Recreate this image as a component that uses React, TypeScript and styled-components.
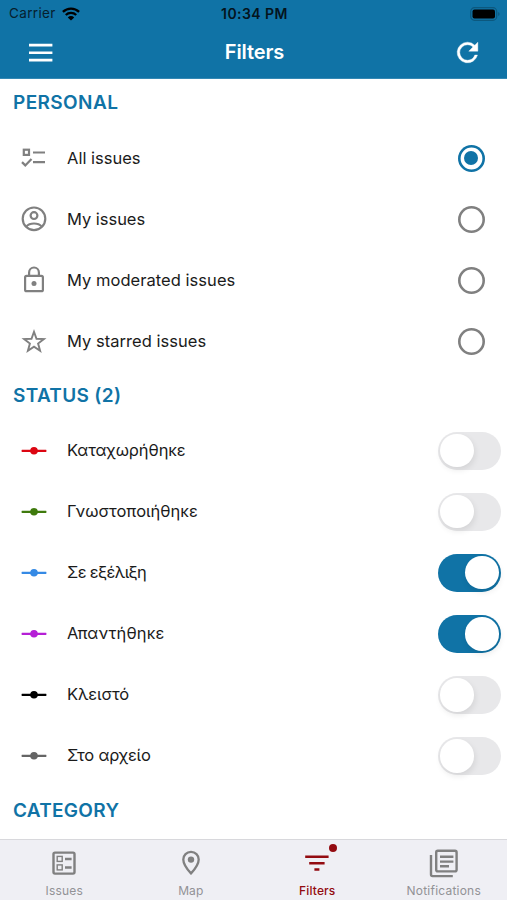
import React, { useState } from "react";
import styled, { createGlobalStyle } from "styled-components";

const BLUE = "#1073a6";
const GREY = "#808080";
const RED = "#930b10";

const GlobalStyle = createGlobalStyle`
  *, *::before, *::after { box-sizing: border-box; }
  body {
    margin: 0;
    background: #fff;
    font-family: Inter, "Liberation Sans", sans-serif;
    font-kerning: normal;
  }
  button { font: inherit; border: 0; padding: 0; background: none; cursor: pointer; }
  svg { display: block; flex: none; }
`;

const Screen = styled.div`
  height: 900px;
  width: 100%;
  display: flex;
  flex-direction: column;
  overflow: hidden;
  background: #fff;
`;

const Header = styled.header`
  flex: none;
  height: 79px;
  background: ${BLUE};
  border-bottom: 1px solid #3488b4;
`;

const StatusBar = styled.div`
  height: 27px;
  display: grid;
  grid-template-columns: 1fr auto 1fr;
  align-items: center;
  padding: 0 7px 0 9px;
  color: #06202d;
  font-size: 13.5px;
  line-height: 27px;
`;

const Carrier = styled.div`
  display: flex;
  align-items: center;
  gap: 6px;
  letter-spacing: 0.36px;
`;

const Clock = styled.div`
  color: #04141d;
  font-weight: 600;
  font-size: 14px;
  letter-spacing: 0.45px;
`;

const BatterySlot = styled.div`
  display: flex;
  justify-content: flex-end;
`;

const Toolbar = styled.div`
  height: 51px;
  display: grid;
  grid-template-columns: 1fr auto 1fr;
  align-items: center;
  padding: 0 24px 0 26px;
  color: #fff;
`;

const ToolButton = styled.button<{ $end?: boolean }>`
  display: flex;
  justify-self: ${(p) => (p.$end ? "end" : "start")};
  color: #fff;
`;

const Title = styled.h1`
  margin: 0;
  font-size: 20px;
  line-height: 24px;
  padding-bottom: 1px;
  font-weight: 600;
  letter-spacing: -0.1px;
`;

const Content = styled.main`
  flex: 1;
  min-height: 0;
  overflow: hidden;
  padding-top: 0.4px;
`;

const SectionTitle = styled.h2<{ $spacing: number }>`
  margin: 0;
  height: 48.1px;
  padding: 0 13px;
  line-height: 48px;
  font-size: 19px;
  font-weight: 600;
  color: ${BLUE};
  letter-spacing: ${(p) => p.$spacing}px;
`;

const Row = styled.label`
  height: 61.1px;
  display: grid;
  grid-template-columns: 30px 1fr auto;
  column-gap: 18px;
  align-items: center;
  padding: 0 6.5px 0 19px;
  cursor: pointer;
`;

const Label = styled.span<{ $spacing: number }>`
  font-size: 16.5px;
  line-height: 21px;
  color: #1b1b1b;
  white-space: nowrap;
  letter-spacing: ${(p) => p.$spacing}px;
`;

const Radio = styled.button<{ $on: boolean }>`
  width: 27px;
  height: 27px;
  margin-right: 16px;
  display: grid;
  place-items: center;
  box-shadow: inset 0 0 0 2.6px ${(p) => (p.$on ? BLUE : GREY)};
  border-radius: 50%;
  &::after {
    content: "";
    width: 14px;
    height: 14px;
    border-radius: 50%;
    background: ${(p) => (p.$on ? BLUE : "transparent")};
  }
`;

const Toggle = styled.button<{ $on: boolean }>`
  width: 62.5px;
  height: 38px;
  padding: 0 2px;
  display: flex;
  align-items: center;
  justify-content: ${(p) => (p.$on ? "flex-end" : "flex-start")};
  border-radius: 19px;
  background: ${(p) => (p.$on ? BLUE : "#e8e8ea")};
  &::after {
    content: "";
    width: 33.5px;
    height: 33.5px;
    border-radius: 50%;
    background: #fff;
    box-shadow: 1px 3px 6px rgba(0, 0, 0, 0.09);
  }
`;

const TabBar = styled.nav`
  flex: none;
  height: 61px;
  display: grid;
  grid-template-columns: repeat(4, 126.5px);
  border-top: 1px solid #d8d8dc;
  background: #efeff4;
`;

const Tab = styled.button<{ $active: boolean }>`
  position: relative;
  display: flex;
  flex-direction: column;
  align-items: center;
  padding-top: 7px;
  padding-left: 2px;
  color: ${(p) => (p.$active ? RED : GREY)};
`;

const TabLabel = styled.span<{ $active: boolean; $spacing: number }>`
  margin-top: 3px;
  font-size: 12px;
  line-height: 18px;
  font-weight: ${(p) => (p.$active ? 500 : 400)};
  color: ${(p) => (p.$active ? RED : "#929296")};
  letter-spacing: ${(p) => p.$spacing}px;
`;

const Badge = styled.i`
  position: absolute;
  top: 4px;
  left: 75.5px;
  width: 8px;
  height: 8px;
  border-radius: 50%;
  background: ${RED};
`;

const WifiIcon = () => (
  <svg width="18" height="14" viewBox="0 0 18 14" fill="none" stroke="#000" strokeWidth="2.3">
    <path d="M.9 4.9a11.6 11.6 0 0 1 16.2 0" />
    <path d="M3.8 8a7.4 7.4 0 0 1 10.4 0" />
    <path d="M9 13.6 5.8 10.4a4.6 4.6 0 0 1 6.4 0z" fill="#000" stroke="none" />
  </svg>
);

const BatteryIcon = () => (
  <svg width="30" height="14" viewBox="0 0 30 14">
    <rect x=".7" y=".7" width="26" height="12.6" rx="3.8" fill="none" stroke="#0c587e" strokeWidth="1.2" />
    <rect x="2.5" y="2.6" width="22.5" height="8.8" rx="2" fill="#000" />
    <path d="M28.2 5v4q1.4-.6 1.4-2T28.2 5z" fill="#0c587e" />
  </svg>
);

const MenuIcon = () => (
  <svg width="30" height="30" viewBox="0 0 30 30" stroke="#fff" strokeWidth="2.6">
    <path d="M3 7.1h23.4M3 14.7h23.4M3 22.1h23.4" />
  </svg>
);

const RefreshIcon = () => (
  <svg width="31" height="31" viewBox="0 0 24 24" fill="currentColor">
    <path d="M17.65 6.35A7.96 7.96 0 0 0 12 4a8 8 0 1 0 7.73 10h-2.08A5.99 5.99 0 0 1 12 18a6 6 0 1 1 0-12c1.66 0 3.14.69 4.22 1.78L13 11h7V4l-2.35 2.35z" stroke="currentColor" strokeWidth=".3" />
  </svg>
);

const ListIcon = () => (
  <svg width="30" height="30" viewBox="0 0 30 30" fill="none" stroke={GREY} strokeWidth="2.2">
    <rect x="4.8" y="6.7" width="5.2" height="5.2" />
    <path d="M14 9.5h12M14 19.2h12M3 19.1l3.3 3.3 6.2-6.4" />
  </svg>
);

const AccountIcon = () => (
  <svg width="30" height="30" viewBox="0 0 30 30" fill="none" stroke={GREY} strokeWidth="2.2">
    <circle cx="15" cy="14.8" r="11.3" />
    <circle cx="15" cy="11.6" r="3.4" />
    <path d="M7.2 22.6C9 20.5 12 19.5 15 19.5s6 1 7.8 3.1" />
  </svg>
);

const LockIcon = () => (
  <svg width="30" height="30" viewBox="0 0 30 30" fill="none" stroke={GREY} strokeWidth="2.2">
    <rect x="6.1" y="10.9" width="17.8" height="15.3" rx="1.5" />
    <path d="M10.1 10.8V7.4a4.9 4.9 0 0 1 9.8 0v3.4" />
    <circle cx="15" cy="18.5" r="2.5" fill={GREY} stroke="none" />
  </svg>
);

const StarIcon = () => (
  <svg width="30" height="30" viewBox="0 0 30 30" fill="none" stroke={GREY} strokeWidth="1.9">
    <path d="m15 5.8 2.5 7 7.4.3-5.8 4.5 2 7.1-6.1-4.1-6.1 4.1 2-7.1-5.8-4.5 7.4-.3z" />
  </svg>
);

const StatusMark = ({ color }: { color: string }) => (
  <svg width="30" height="30" viewBox="0 0 30 30" fill={color}>
    <rect x="2.6" y="13.7" width="24.8" height="2.2" rx=".4" />
    <circle cx="15" cy="14.8" r="3.8" />
  </svg>
);

const BallotIcon = () => (
  <svg width="32" height="32" viewBox="0 0 32 32" fill="none" stroke="currentColor">
    <rect x="5.5" y="5.6" width="21" height="21" rx="1.5" strokeWidth="2.4" />
    <rect x="9.2" y="9.4" width="5" height="5" strokeWidth="1.4" />
    <rect x="9.2" y="17.9" width="5" height="5" strokeWidth="1.4" />
    <path d="M17 12h6.6M17 20.5h6.6" strokeWidth="2.3" />
  </svg>
);

const PinIcon = () => (
  <svg width="32" height="32" viewBox="0 0 32 32" fill="none" stroke="currentColor" strokeWidth="2.3">
    <path d="M16 4.9c-4.4 0-7.7 3.3-7.7 7.6C8.3 18.2 16 26.4 16 26.4s7.7-8.2 7.7-13.9c0-4.3-3.3-7.6-7.7-7.6z" />
    <circle cx="16" cy="12.6" r="3.2" fill="currentColor" stroke="none" />
  </svg>
);

const FilterIcon = () => (
  <svg width="32" height="32" viewBox="0 0 32 32" stroke="currentColor" strokeWidth="2.5">
    <path d="M4.2 9.8h23.4M8.2 16.2h15.4M13.4 22.6h5" />
  </svg>
);

const NewsIcon = () => (
  <svg width="32" height="32" viewBox="0 0 32 32" fill="none" stroke="currentColor" strokeWidth="2.4">
    <rect x="8.2" y="3.8" width="20.4" height="20.6" rx="1.6" />
    <path d="M3 8v19.5q0 1.6 1.6 1.6h20.2M12 9.7h13.4M12 14.6h13.4M12 19.2h9" />
  </svg>
);

const personal = [
  { label: "All issues", spacing: 0, Icon: ListIcon },
  { label: "My issues", spacing: -0.03, Icon: AccountIcon },
  { label: "My moderated issues", spacing: 0.04, Icon: LockIcon },
  { label: "My starred issues", spacing: 0.03, Icon: StarIcon },
];

const statuses = [
  { label: "Καταχωρήθηκε", spacing: -0.1, color: "#dc0612" },
  { label: "Γνωστοποιήθηκε", spacing: 0, color: "#3f7a0d" },
  { label: "Σε εξέλιξη", spacing: -0.68, color: "#358ae5" },
  { label: "Απαντήθηκε", spacing: 0.12, color: "#b51fd6" },
  { label: "Κλειστό", spacing: -0.15, color: "#000000" },
  { label: "Στο αρχείο", spacing: -0.2, color: "#656565" },
];

const tabs = [
  { label: "Issues", spacing: 0.2, Icon: BallotIcon },
  { label: "Map", spacing: 0.1, Icon: PinIcon },
  { label: "Filters", spacing: 0.15, Icon: FilterIcon },
  { label: "Notifications", spacing: 0.22, Icon: NewsIcon },
];

export default function App() {
  const [scope, setScope] = useState(0);
  const [enabled, setEnabled] = useState([false, false, true, true, false, false]);
  const [tab, setTab] = useState(2);
  const count = enabled.filter(Boolean).length;

  return (
    <>
      <GlobalStyle />
      <Screen>
        <Header>
          <StatusBar>
            <Carrier>Carrier<WifiIcon /></Carrier>
            <Clock>10:34 PM</Clock>
            <BatterySlot><BatteryIcon /></BatterySlot>
          </StatusBar>
          <Toolbar>
            <ToolButton aria-label="Menu"><MenuIcon /></ToolButton>
            <Title>Filters</Title>
            <ToolButton $end aria-label="Refresh"><RefreshIcon /></ToolButton>
          </Toolbar>
        </Header>
        <Content>
          <SectionTitle $spacing={0.4}>PERSONAL</SectionTitle>
          {personal.map(({ label, spacing, Icon }, i) => (
            <Row key={label}>
              <Icon />
              <Label $spacing={spacing}>{label}</Label>
              <Radio $on={scope === i} role="radio" aria-checked={scope === i} onClick={() => setScope(i)} />
            </Row>
          ))}
          <SectionTitle $spacing={0.32}>STATUS ({count})</SectionTitle>
          {statuses.map(({ label, spacing, color }, i) => (
            <Row key={label}>
              <StatusMark color={color} />
              <Label $spacing={spacing}>{label}</Label>
              <Toggle
                $on={enabled[i]}
                role="switch"
                aria-checked={enabled[i]}
                onClick={() => setEnabled(enabled.map((v, n) => (n === i ? !v : v)))}
              />
            </Row>
          ))}
          <SectionTitle $spacing={0.28}>CATEGORY</SectionTitle>
        </Content>
        <TabBar>
          {tabs.map(({ label, spacing, Icon }, i) => (
            <Tab key={label} $active={tab === i} onClick={() => setTab(i)}>
              <Icon />
              {i === 2 && <Badge />}
              <TabLabel $active={tab === i} $spacing={spacing}>{label}</TabLabel>
            </Tab>
          ))}
        </TabBar>
      </Screen>
    </>
  );
}
